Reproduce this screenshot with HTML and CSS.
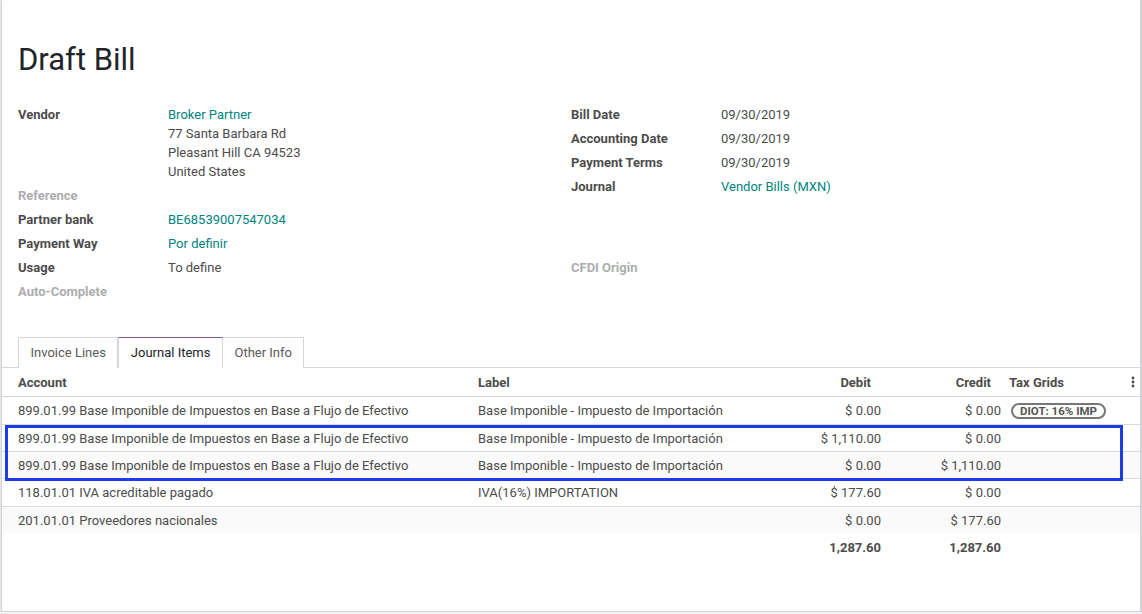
FILE: index.html
```html
<!DOCTYPE html>
<html>
<head>
<meta charset="utf-8">
<link rel="stylesheet" href="styles.css">
</head>
<body>
<div class="sheet">
  <h1 class="title">Draft Bill</h1>
  <div class="groups">
    <div class="group">
      <div class="field"><div class="label">Vendor</div><div class="value"><a class="link">Broker Partner</a><br>77 Santa Barbara Rd<br>Pleasant Hill CA 94523<br>United States</div></div>
      <div class="field"><div class="label muted">Reference</div><div class="value"></div></div>
      <div class="field"><div class="label">Partner bank</div><div class="value"><a class="link">BE68539007547034</a></div></div>
      <div class="field"><div class="label">Payment Way</div><div class="value"><a class="link">Por definir</a></div></div>
      <div class="field"><div class="label">Usage</div><div class="value">To define</div></div>
      <div class="field"><div class="label muted">Auto-Complete</div><div class="value"></div></div>
    </div>
    <div class="group">
      <div class="field"><div class="label">Bill Date</div><div class="value">09/30/2019</div></div>
      <div class="field"><div class="label">Accounting Date</div><div class="value">09/30/2019</div></div>
      <div class="field"><div class="label">Payment Terms</div><div class="value">09/30/2019</div></div>
      <div class="field"><div class="label">Journal</div><div class="value"><a class="link">Vendor Bills (MXN)</a></div></div>
      <div class="field spaced"><div class="label muted">CFDI Origin</div><div class="value"></div></div>
    </div>
  </div>

  <div class="tabs">
    <div class="tab">Invoice Lines</div>
    <div class="tab active">Journal Items</div>
    <div class="tab">Other Info</div>
  </div>

  <div class="table-wrap">
    <table class="lines">
      <colgroup>
        <col class="c-account"><col class="c-label"><col class="c-debit"><col class="c-credit"><col class="c-tax"><col class="c-opt">
      </colgroup>
      <thead>
        <tr><th class="first">Account</th><th>Label</th><th class="num">Debit</th><th class="num">Credit</th><th>Tax Grids</th><th class="opt"><svg width="4" height="12" viewBox="0 0 4 12"><circle cx="2" cy="2" r="1.4" fill="#4c4c4c"/><circle cx="2" cy="6" r="1.4" fill="#4c4c4c"/><circle cx="2" cy="10" r="1.4" fill="#4c4c4c"/></svg></th></tr>
      </thead>
      <tbody>
        <tr><td class="first">899.01.99 Base Imponible de Impuestos en Base a Flujo de Efectivo</td><td>Base Imponible - Impuesto de Importación</td><td class="num">$ 0.00</td><td class="num">$ 0.00</td><td><span class="badge">DIOT: 16% IMP</span></td><td></td></tr>
        <tr><td class="first">899.01.99 Base Imponible de Impuestos en Base a Flujo de Efectivo</td><td>Base Imponible - Impuesto de Importación</td><td class="num">$ 1,110.00</td><td class="num">$ 0.00</td><td></td><td></td></tr>
        <tr class="stripe"><td class="first">899.01.99 Base Imponible de Impuestos en Base a Flujo de Efectivo</td><td>Base Imponible - Impuesto de Importación</td><td class="num">$ 0.00</td><td class="num">$ 1,110.00</td><td></td><td></td></tr>
        <tr><td class="first">118.01.01 IVA acreditable pagado</td><td>IVA(16%) IMPORTATION</td><td class="num">$ 177.60</td><td class="num">$ 0.00</td><td></td><td></td></tr>
        <tr class="stripe"><td class="first">201.01.01 Proveedores nacionales</td><td></td><td class="num">$ 0.00</td><td class="num">$ 177.60</td><td></td><td></td></tr>
      </tbody>
      <tfoot>
        <tr><td class="first"></td><td></td><td class="num">1,287.60</td><td class="num">1,287.60</td><td></td><td></td></tr>
      </tfoot>
    </table>
    <div class="annotation"></div>
  </div>
</div>
</body>
</html>
```

FILE: styles.css
```css
html, body {
  margin: 0;
  padding: 0;
  background: #f4f4f4;
  font-family: Roboto, "Liberation Sans", sans-serif;
  font-size: 13px;
  color: #4c4c4c;
}

.sheet {
  box-sizing: border-box;
  width: 1141px;
  height: 612px;
  margin-left: 1px;
  background: #fff;
  border: 1px solid #cfd3d8;
  border-top: none;
  border-right-width: 2px;
  box-shadow: 0 2px 3px rgba(0, 0, 0, 0.15);
  padding-top: 42px;
}

.title {
  margin: 0;
  padding-left: 16px;
  font-size: 31px;
  line-height: 36px;
  font-weight: 400;
  color: #212529;
}

.groups {
  display: grid;
  grid-template-columns: 553px 1fr;
  padding: 0 16px;
  margin-top: 24px;
}

.field {
  display: grid;
  grid-template-columns: 150px 1fr;
  padding: 2.5px 0;
  line-height: 19px;
}

.field.spaced {
  margin-top: 57px;
}

.label {
  font-weight: 700;
  color: #4c4c4c;
}

.label.muted {
  color: #adadad;
}

.link {
  color: #00847f;
  text-decoration: none;
}

.tabs {
  display: flex;
  margin-top: 34px;
  padding-left: 16px;
  border-bottom: 1px solid #d3d7dc;
  height: 30px;
}

.tab {
  box-sizing: border-box;
  height: 31px;
  padding: 0 11.5px;
  line-height: 30px;
  border: 1px solid #d3d7dc;
  border-bottom: none;
  color: #5a5a5a;
  background: #fff;
}

.tab + .tab {
  border-left: none;
}

.tab.active {
  color: #212529;
  border-top: 1px solid #875a7b;
  border-left: 1px solid #d3d7dc;
  border-right: 1px solid #d3d7dc;
  height: 31px;
  position: relative;
  z-index: 1;
}

.tab.active + .tab {
  border-left: none;
}

.table-wrap {
  position: relative;
}

.lines {
  width: 100%;
  table-layout: fixed;
  border-collapse: collapse;
}

.c-account { width: 472px; }
.c-label { width: 301px; }
.c-debit { width: 110px; }
.c-credit { width: 120px; }
.c-tax { width: 120px; }
.c-opt { width: auto; }

.lines th,
.lines td {
  padding: 0 4px;
  text-align: left;
  white-space: nowrap;
  overflow: visible;
  line-height: 19px;
}

.lines th {
  font-weight: 700;
  height: 28px;
  border-bottom: 1px solid #d3d7dc;
}

.lines th.num {
  padding-right: 14px;
}

.lines tbody td {
  height: 26px;
  border-top: 1px solid #d8dce0;
}

.lines tbody tr:first-child td {
  border-top: none;
  height: 27px;
}

.lines tbody tr:nth-child(4) td {
  height: 27px;
}

.lines tr.stripe td {
  background: #fafafa;
}

.lines .first {
  padding-left: 16px;
}

.lines .num {
  text-align: right;
}

.lines th.opt {
  text-align: center;
  padding: 0;
}

.lines th.opt svg {
  display: block;
  margin: 0 auto;
}

.lines tfoot td {
  height: 28px;
  font-weight: 700;
}

.badge {
  display: inline-block;
  margin-left: 2px;
  padding: 0 7px;
  border: 2px solid #777;
  border-radius: 10px;
  font-size: 11.5px;
  line-height: 12px;
  font-weight: 700;
  color: #555;
}

.annotation {
  position: absolute;
  left: 3px;
  top: 57px;
  width: 1112px;
  height: 50px;
  border: 3px solid #1f3be6;
  pointer-events: none;
}
```
